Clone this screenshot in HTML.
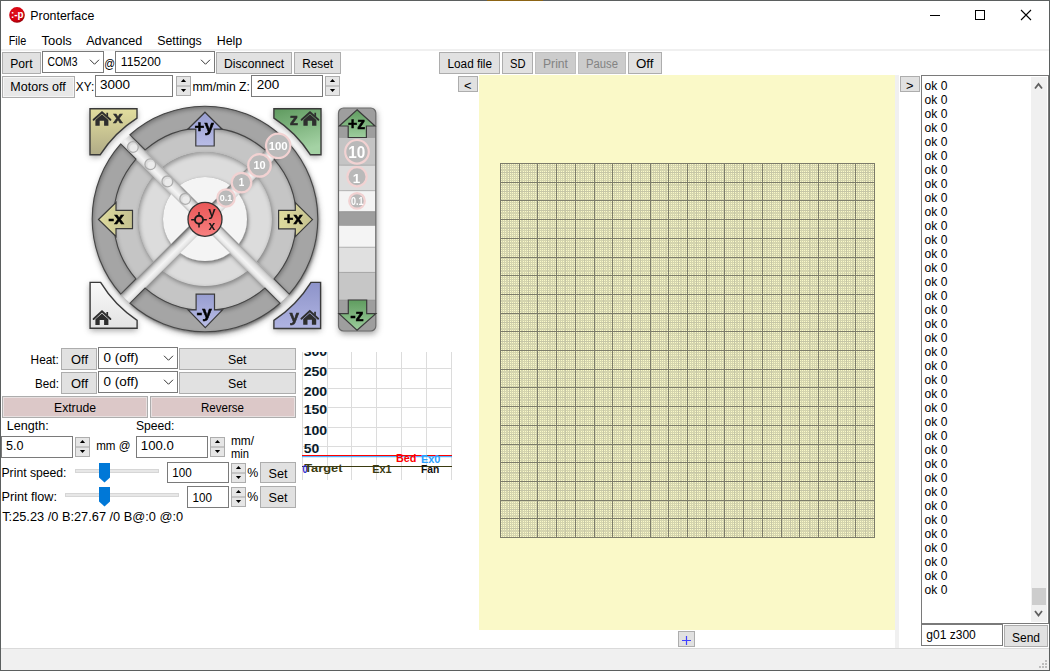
<!DOCTYPE html>
<html><head><meta charset="utf-8"><title>Pronterface</title>
<style>html,body{margin:0;padding:0;width:1050px;height:671px;overflow:hidden;background:#fff;position:relative}</style>
</head><body>
<svg width="1050" height="671" viewBox="0 0 1050 671" font-family='"Liberation Sans", sans-serif' style="position:absolute;left:0;top:0">
<defs>
<filter id="blur3" x="-20%" y="-20%" width="140%" height="140%"><feGaussianBlur stdDeviation="3"/></filter>
<filter id="blur2" x="-20%" y="-20%" width="140%" height="140%"><feGaussianBlur stdDeviation="2"/></filter>
<filter id="blur1" x="-20%" y="-20%" width="140%" height="140%"><feGaussianBlur stdDeviation="1"/></filter>
</defs>
<rect x="0" y="0" width="1050" height="671" fill="#ffffff"/>
<radialGradient id="icong" cx="0.4" cy="0.35" r="0.7"><stop offset="0" stop-color="#e0101a"/><stop offset="0.7" stop-color="#d4000e"/><stop offset="1" stop-color="#8a0008"/></radialGradient>
<circle cx="17" cy="14.9" r="7.8" fill="url(#icong)"/>
<text x="17.2" y="18.0" font-size="10" fill="#fff" font-weight="bold" textLength="12.5" lengthAdjust="spacingAndGlyphs" text-anchor="middle">:-p</text>
<text x="30.3" y="19.8" font-size="12.3" fill="#000" textLength="64" lengthAdjust="spacingAndGlyphs">Pronterface</text>
<line x1="930" y1="15.5" x2="940" y2="15.5" stroke="#000" stroke-width="1"/>
<rect x="975.5" y="10.5" width="9" height="9" fill="none" stroke="#000" stroke-width="1"/>
<path d="M1021,10 L1031,20 M1031,10 L1021,20" stroke="#000" stroke-width="1.1"/>
<text x="8.7" y="44.7" font-size="12" fill="#000" textLength="17.5" lengthAdjust="spacingAndGlyphs">File</text>
<text x="41.5" y="44.7" font-size="12" fill="#000" textLength="30.3" lengthAdjust="spacingAndGlyphs">Tools</text>
<text x="86.2" y="44.7" font-size="12" fill="#000" textLength="56.2" lengthAdjust="spacingAndGlyphs">Advanced</text>
<text x="157.2" y="44.7" font-size="12" fill="#000" textLength="44.6" lengthAdjust="spacingAndGlyphs">Settings</text>
<text x="216.7" y="44.7" font-size="12" fill="#000" textLength="25.5" lengthAdjust="spacingAndGlyphs">Help</text>
<rect x="1" y="49" width="1048" height="2" fill="#f0f0f0"/>
<rect x="2.5" y="52.5" width="38" height="21" fill="#e1e1e1" stroke="#adadad" stroke-width="1"/>
<text x="10.3" y="67.7" font-size="12" fill="#000" textLength="22.2" lengthAdjust="spacingAndGlyphs">Port</text>
<rect x="42.5" y="51.5" width="61" height="21" fill="#fff" stroke="#7a7a7a" stroke-width="1"/>
<text x="47.5" y="65.5" font-size="12" fill="#000" textLength="30" lengthAdjust="spacingAndGlyphs">COM3</text>
<path d="M90.0,59.75 L94.5,64.25 L99.0,59.75" fill="none" stroke="#333" stroke-width="1"/>
<text x="104.2" y="67.5" font-size="12" fill="#000" textLength="10.8" lengthAdjust="spacingAndGlyphs">@</text>
<rect x="115.5" y="51.5" width="99" height="21" fill="#fff" stroke="#7a7a7a" stroke-width="1"/>
<text x="120.8" y="65.5" font-size="12" fill="#000" textLength="40" lengthAdjust="spacingAndGlyphs">115200</text>
<path d="M201.0,59.75 L205.5,64.25 L210.0,59.75" fill="none" stroke="#333" stroke-width="1"/>
<rect x="216.5" y="52.5" width="75" height="21" fill="#e1e1e1" stroke="#adadad" stroke-width="1"/>
<text x="224.1" y="67.7" font-size="12" fill="#000" textLength="60" lengthAdjust="spacingAndGlyphs">Disconnect</text>
<rect x="294.5" y="52.5" width="46" height="21" fill="#e1e1e1" stroke="#adadad" stroke-width="1"/>
<text x="302.2" y="67.7" font-size="12" fill="#000" textLength="30.8" lengthAdjust="spacingAndGlyphs">Reset</text>
<rect x="439.5" y="52.5" width="60" height="21" fill="#e1e1e1" stroke="#adadad" stroke-width="1"/>
<text x="447.5" y="67.7" font-size="12" fill="#000" textLength="44.5" lengthAdjust="spacingAndGlyphs">Load file</text>
<rect x="502.5" y="52.5" width="30" height="21" fill="#e1e1e1" stroke="#adadad" stroke-width="1"/>
<text x="510" y="67.7" font-size="12" fill="#000" textLength="15.5" lengthAdjust="spacingAndGlyphs">SD</text>
<rect x="535.5" y="52.5" width="40" height="21" fill="#cccccc" stroke="#bfbfbf" stroke-width="1"/>
<text x="543" y="67.7" font-size="12" fill="#838383" textLength="25" lengthAdjust="spacingAndGlyphs">Print</text>
<rect x="578.5" y="52.5" width="47" height="21" fill="#cccccc" stroke="#bfbfbf" stroke-width="1"/>
<text x="586" y="67.7" font-size="12" fill="#838383" textLength="32" lengthAdjust="spacingAndGlyphs">Pause</text>
<rect x="628.5" y="52.5" width="33" height="21" fill="#e1e1e1" stroke="#adadad" stroke-width="1"/>
<text x="636" y="67.7" font-size="12" fill="#000" textLength="17.5" lengthAdjust="spacingAndGlyphs">Off</text>
<rect x="2.5" y="76.5" width="72" height="21" fill="#e1e1e1" stroke="#adadad" stroke-width="1"/>
<rect x="3.5" y="77.5" width="70" height="19" fill="#e8e8e8" stroke="#f5f5f5" stroke-width="1"/>
<text x="10.3" y="91" font-size="12" fill="#000" textLength="55.5" lengthAdjust="spacingAndGlyphs">Motors off</text>
<text x="75.8" y="91" font-size="12" fill="#000" textLength="18.4" lengthAdjust="spacingAndGlyphs">XY:</text>
<rect x="95.5" y="75.5" width="77" height="21" fill="#fff" stroke="#7a7a7a" stroke-width="1"/>
<text x="100" y="88.8" font-size="12" fill="#000" textLength="30" lengthAdjust="spacingAndGlyphs">3000</text>
<rect x="176.5" y="76.5" width="14" height="19" fill="#e6e6e6" stroke="#adadad" stroke-width="1"/>
<line x1="176" y1="86.0" x2="191" y2="86.0" stroke="#adadad" stroke-width="1.2"/>
<path d="M180.9,82 L183.5,79 L186.1,82 Z" fill="#000"/>
<path d="M180.9,89 L183.5,92 L186.1,89 Z" fill="#000"/>
<text x="192.4" y="91" font-size="12" fill="#000" textLength="57.5" lengthAdjust="spacingAndGlyphs">mm/min Z:</text>
<rect x="251.5" y="75.5" width="71" height="21" fill="#fff" stroke="#7a7a7a" stroke-width="1"/>
<text x="256.8" y="88.8" font-size="12" fill="#000" textLength="22.5" lengthAdjust="spacingAndGlyphs">200</text>
<rect x="325.5" y="76.5" width="14" height="19" fill="#e6e6e6" stroke="#adadad" stroke-width="1"/>
<line x1="325" y1="86.0" x2="340" y2="86.0" stroke="#adadad" stroke-width="1.2"/>
<path d="M329.9,82 L332.5,79 L335.1,82 Z" fill="#000"/>
<path d="M329.9,89 L332.5,92 L335.1,89 Z" fill="#000"/>
<rect x="458.5" y="76.5" width="19" height="15" fill="#e1e1e1" stroke="#adadad" stroke-width="1"/>
<text x="464" y="89.8" font-size="12" fill="#000" textLength="7.5" lengthAdjust="spacingAndGlyphs">&lt;</text>
<rect x="479" y="75" width="416" height="555" fill="#faf9c8"/>
<rect x="895" y="75" width="4" height="573" fill="#f0f0f0"/>
<rect x="900.5" y="76.5" width="19" height="15" fill="#e1e1e1" stroke="#adadad" stroke-width="1"/>
<text x="906" y="89.8" font-size="12" fill="#000" textLength="7.5" lengthAdjust="spacingAndGlyphs">&gt;</text>
<rect x="678.5" y="631.5" width="16" height="15" fill="#e1e1e1" stroke="#adadad" stroke-width="1"/>
<text x="686.5" y="643.3" font-size="12" fill="#000" text-anchor="middle"></text>
<path d="M682,640.5 L691,640.5 M686.5,636 L686.5,645" stroke="#4040ff" stroke-width="1.2"/>
<g shape-rendering="crispEdges">
<line x1="502.5" y1="163" x2="502.5" y2="538" stroke="#d4d4ae"/>
<line x1="500" y1="165.5" x2="875" y2="165.5" stroke="#d4d4ae"/>
<line x1="504.5" y1="163" x2="504.5" y2="538" stroke="#d4d4ae"/>
<line x1="500" y1="167.5" x2="875" y2="167.5" stroke="#d4d4ae"/>
<line x1="506.5" y1="163" x2="506.5" y2="538" stroke="#d4d4ae"/>
<line x1="500" y1="169.5" x2="875" y2="169.5" stroke="#d4d4ae"/>
<line x1="507.5" y1="163" x2="507.5" y2="538" stroke="#d4d4ae"/>
<line x1="500" y1="170.5" x2="875" y2="170.5" stroke="#d4d4ae"/>
<line x1="511.5" y1="163" x2="511.5" y2="538" stroke="#d4d4ae"/>
<line x1="500" y1="174.5" x2="875" y2="174.5" stroke="#d4d4ae"/>
<line x1="513.5" y1="163" x2="513.5" y2="538" stroke="#d4d4ae"/>
<line x1="500" y1="176.5" x2="875" y2="176.5" stroke="#d4d4ae"/>
<line x1="515.5" y1="163" x2="515.5" y2="538" stroke="#d4d4ae"/>
<line x1="500" y1="178.5" x2="875" y2="178.5" stroke="#d4d4ae"/>
<line x1="517.5" y1="163" x2="517.5" y2="538" stroke="#d4d4ae"/>
<line x1="500" y1="180.5" x2="875" y2="180.5" stroke="#d4d4ae"/>
<line x1="521.5" y1="163" x2="521.5" y2="538" stroke="#d4d4ae"/>
<line x1="500" y1="184.5" x2="875" y2="184.5" stroke="#d4d4ae"/>
<line x1="522.5" y1="163" x2="522.5" y2="538" stroke="#d4d4ae"/>
<line x1="500" y1="185.5" x2="875" y2="185.5" stroke="#d4d4ae"/>
<line x1="524.5" y1="163" x2="524.5" y2="538" stroke="#d4d4ae"/>
<line x1="500" y1="187.5" x2="875" y2="187.5" stroke="#d4d4ae"/>
<line x1="526.5" y1="163" x2="526.5" y2="538" stroke="#d4d4ae"/>
<line x1="500" y1="189.5" x2="875" y2="189.5" stroke="#d4d4ae"/>
<line x1="530.5" y1="163" x2="530.5" y2="538" stroke="#d4d4ae"/>
<line x1="500" y1="193.5" x2="875" y2="193.5" stroke="#d4d4ae"/>
<line x1="532.5" y1="163" x2="532.5" y2="538" stroke="#d4d4ae"/>
<line x1="500" y1="195.5" x2="875" y2="195.5" stroke="#d4d4ae"/>
<line x1="534.5" y1="163" x2="534.5" y2="538" stroke="#d4d4ae"/>
<line x1="500" y1="197.5" x2="875" y2="197.5" stroke="#d4d4ae"/>
<line x1="536.5" y1="163" x2="536.5" y2="538" stroke="#d4d4ae"/>
<line x1="500" y1="199.5" x2="875" y2="199.5" stroke="#d4d4ae"/>
<line x1="539.5" y1="163" x2="539.5" y2="538" stroke="#d4d4ae"/>
<line x1="500" y1="202.5" x2="875" y2="202.5" stroke="#d4d4ae"/>
<line x1="541.5" y1="163" x2="541.5" y2="538" stroke="#d4d4ae"/>
<line x1="500" y1="204.5" x2="875" y2="204.5" stroke="#d4d4ae"/>
<line x1="543.5" y1="163" x2="543.5" y2="538" stroke="#d4d4ae"/>
<line x1="500" y1="206.5" x2="875" y2="206.5" stroke="#d4d4ae"/>
<line x1="545.5" y1="163" x2="545.5" y2="538" stroke="#d4d4ae"/>
<line x1="500" y1="208.5" x2="875" y2="208.5" stroke="#d4d4ae"/>
<line x1="549.5" y1="163" x2="549.5" y2="538" stroke="#d4d4ae"/>
<line x1="500" y1="212.5" x2="875" y2="212.5" stroke="#d4d4ae"/>
<line x1="550.5" y1="163" x2="550.5" y2="538" stroke="#d4d4ae"/>
<line x1="500" y1="213.5" x2="875" y2="213.5" stroke="#d4d4ae"/>
<line x1="552.5" y1="163" x2="552.5" y2="538" stroke="#d4d4ae"/>
<line x1="500" y1="215.5" x2="875" y2="215.5" stroke="#d4d4ae"/>
<line x1="554.5" y1="163" x2="554.5" y2="538" stroke="#d4d4ae"/>
<line x1="500" y1="217.5" x2="875" y2="217.5" stroke="#d4d4ae"/>
<line x1="558.5" y1="163" x2="558.5" y2="538" stroke="#d4d4ae"/>
<line x1="500" y1="221.5" x2="875" y2="221.5" stroke="#d4d4ae"/>
<line x1="560.5" y1="163" x2="560.5" y2="538" stroke="#d4d4ae"/>
<line x1="500" y1="223.5" x2="875" y2="223.5" stroke="#d4d4ae"/>
<line x1="562.5" y1="163" x2="562.5" y2="538" stroke="#d4d4ae"/>
<line x1="500" y1="225.5" x2="875" y2="225.5" stroke="#d4d4ae"/>
<line x1="564.5" y1="163" x2="564.5" y2="538" stroke="#d4d4ae"/>
<line x1="500" y1="227.5" x2="875" y2="227.5" stroke="#d4d4ae"/>
<line x1="567.5" y1="163" x2="567.5" y2="538" stroke="#d4d4ae"/>
<line x1="500" y1="230.5" x2="875" y2="230.5" stroke="#d4d4ae"/>
<line x1="569.5" y1="163" x2="569.5" y2="538" stroke="#d4d4ae"/>
<line x1="500" y1="232.5" x2="875" y2="232.5" stroke="#d4d4ae"/>
<line x1="571.5" y1="163" x2="571.5" y2="538" stroke="#d4d4ae"/>
<line x1="500" y1="234.5" x2="875" y2="234.5" stroke="#d4d4ae"/>
<line x1="573.5" y1="163" x2="573.5" y2="538" stroke="#d4d4ae"/>
<line x1="500" y1="236.5" x2="875" y2="236.5" stroke="#d4d4ae"/>
<line x1="577.5" y1="163" x2="577.5" y2="538" stroke="#d4d4ae"/>
<line x1="500" y1="240.5" x2="875" y2="240.5" stroke="#d4d4ae"/>
<line x1="579.5" y1="163" x2="579.5" y2="538" stroke="#d4d4ae"/>
<line x1="500" y1="242.5" x2="875" y2="242.5" stroke="#d4d4ae"/>
<line x1="580.5" y1="163" x2="580.5" y2="538" stroke="#d4d4ae"/>
<line x1="500" y1="243.5" x2="875" y2="243.5" stroke="#d4d4ae"/>
<line x1="582.5" y1="163" x2="582.5" y2="538" stroke="#d4d4ae"/>
<line x1="500" y1="245.5" x2="875" y2="245.5" stroke="#d4d4ae"/>
<line x1="586.5" y1="163" x2="586.5" y2="538" stroke="#d4d4ae"/>
<line x1="500" y1="249.5" x2="875" y2="249.5" stroke="#d4d4ae"/>
<line x1="588.5" y1="163" x2="588.5" y2="538" stroke="#d4d4ae"/>
<line x1="500" y1="251.5" x2="875" y2="251.5" stroke="#d4d4ae"/>
<line x1="590.5" y1="163" x2="590.5" y2="538" stroke="#d4d4ae"/>
<line x1="500" y1="253.5" x2="875" y2="253.5" stroke="#d4d4ae"/>
<line x1="592.5" y1="163" x2="592.5" y2="538" stroke="#d4d4ae"/>
<line x1="500" y1="255.5" x2="875" y2="255.5" stroke="#d4d4ae"/>
<line x1="595.5" y1="163" x2="595.5" y2="538" stroke="#d4d4ae"/>
<line x1="500" y1="258.5" x2="875" y2="258.5" stroke="#d4d4ae"/>
<line x1="597.5" y1="163" x2="597.5" y2="538" stroke="#d4d4ae"/>
<line x1="500" y1="260.5" x2="875" y2="260.5" stroke="#d4d4ae"/>
<line x1="599.5" y1="163" x2="599.5" y2="538" stroke="#d4d4ae"/>
<line x1="500" y1="262.5" x2="875" y2="262.5" stroke="#d4d4ae"/>
<line x1="601.5" y1="163" x2="601.5" y2="538" stroke="#d4d4ae"/>
<line x1="500" y1="264.5" x2="875" y2="264.5" stroke="#d4d4ae"/>
<line x1="605.5" y1="163" x2="605.5" y2="538" stroke="#d4d4ae"/>
<line x1="500" y1="268.5" x2="875" y2="268.5" stroke="#d4d4ae"/>
<line x1="607.5" y1="163" x2="607.5" y2="538" stroke="#d4d4ae"/>
<line x1="500" y1="270.5" x2="875" y2="270.5" stroke="#d4d4ae"/>
<line x1="608.5" y1="163" x2="608.5" y2="538" stroke="#d4d4ae"/>
<line x1="500" y1="271.5" x2="875" y2="271.5" stroke="#d4d4ae"/>
<line x1="610.5" y1="163" x2="610.5" y2="538" stroke="#d4d4ae"/>
<line x1="500" y1="273.5" x2="875" y2="273.5" stroke="#d4d4ae"/>
<line x1="614.5" y1="163" x2="614.5" y2="538" stroke="#d4d4ae"/>
<line x1="500" y1="277.5" x2="875" y2="277.5" stroke="#d4d4ae"/>
<line x1="616.5" y1="163" x2="616.5" y2="538" stroke="#d4d4ae"/>
<line x1="500" y1="279.5" x2="875" y2="279.5" stroke="#d4d4ae"/>
<line x1="618.5" y1="163" x2="618.5" y2="538" stroke="#d4d4ae"/>
<line x1="500" y1="281.5" x2="875" y2="281.5" stroke="#d4d4ae"/>
<line x1="620.5" y1="163" x2="620.5" y2="538" stroke="#d4d4ae"/>
<line x1="500" y1="283.5" x2="875" y2="283.5" stroke="#d4d4ae"/>
<line x1="623.5" y1="163" x2="623.5" y2="538" stroke="#d4d4ae"/>
<line x1="500" y1="286.5" x2="875" y2="286.5" stroke="#d4d4ae"/>
<line x1="625.5" y1="163" x2="625.5" y2="538" stroke="#d4d4ae"/>
<line x1="500" y1="288.5" x2="875" y2="288.5" stroke="#d4d4ae"/>
<line x1="627.5" y1="163" x2="627.5" y2="538" stroke="#d4d4ae"/>
<line x1="500" y1="290.5" x2="875" y2="290.5" stroke="#d4d4ae"/>
<line x1="629.5" y1="163" x2="629.5" y2="538" stroke="#d4d4ae"/>
<line x1="500" y1="292.5" x2="875" y2="292.5" stroke="#d4d4ae"/>
<line x1="633.5" y1="163" x2="633.5" y2="538" stroke="#d4d4ae"/>
<line x1="500" y1="296.5" x2="875" y2="296.5" stroke="#d4d4ae"/>
<line x1="635.5" y1="163" x2="635.5" y2="538" stroke="#d4d4ae"/>
<line x1="500" y1="298.5" x2="875" y2="298.5" stroke="#d4d4ae"/>
<line x1="637.5" y1="163" x2="637.5" y2="538" stroke="#d4d4ae"/>
<line x1="500" y1="300.5" x2="875" y2="300.5" stroke="#d4d4ae"/>
<line x1="638.5" y1="163" x2="638.5" y2="538" stroke="#d4d4ae"/>
<line x1="500" y1="301.5" x2="875" y2="301.5" stroke="#d4d4ae"/>
<line x1="642.5" y1="163" x2="642.5" y2="538" stroke="#d4d4ae"/>
<line x1="500" y1="305.5" x2="875" y2="305.5" stroke="#d4d4ae"/>
<line x1="644.5" y1="163" x2="644.5" y2="538" stroke="#d4d4ae"/>
<line x1="500" y1="307.5" x2="875" y2="307.5" stroke="#d4d4ae"/>
<line x1="646.5" y1="163" x2="646.5" y2="538" stroke="#d4d4ae"/>
<line x1="500" y1="309.5" x2="875" y2="309.5" stroke="#d4d4ae"/>
<line x1="648.5" y1="163" x2="648.5" y2="538" stroke="#d4d4ae"/>
<line x1="500" y1="311.5" x2="875" y2="311.5" stroke="#d4d4ae"/>
<line x1="651.5" y1="163" x2="651.5" y2="538" stroke="#d4d4ae"/>
<line x1="500" y1="314.5" x2="875" y2="314.5" stroke="#d4d4ae"/>
<line x1="653.5" y1="163" x2="653.5" y2="538" stroke="#d4d4ae"/>
<line x1="500" y1="316.5" x2="875" y2="316.5" stroke="#d4d4ae"/>
<line x1="655.5" y1="163" x2="655.5" y2="538" stroke="#d4d4ae"/>
<line x1="500" y1="318.5" x2="875" y2="318.5" stroke="#d4d4ae"/>
<line x1="657.5" y1="163" x2="657.5" y2="538" stroke="#d4d4ae"/>
<line x1="500" y1="320.5" x2="875" y2="320.5" stroke="#d4d4ae"/>
<line x1="661.5" y1="163" x2="661.5" y2="538" stroke="#d4d4ae"/>
<line x1="500" y1="324.5" x2="875" y2="324.5" stroke="#d4d4ae"/>
<line x1="663.5" y1="163" x2="663.5" y2="538" stroke="#d4d4ae"/>
<line x1="500" y1="326.5" x2="875" y2="326.5" stroke="#d4d4ae"/>
<line x1="665.5" y1="163" x2="665.5" y2="538" stroke="#d4d4ae"/>
<line x1="500" y1="328.5" x2="875" y2="328.5" stroke="#d4d4ae"/>
<line x1="666.5" y1="163" x2="666.5" y2="538" stroke="#d4d4ae"/>
<line x1="500" y1="329.5" x2="875" y2="329.5" stroke="#d4d4ae"/>
<line x1="670.5" y1="163" x2="670.5" y2="538" stroke="#d4d4ae"/>
<line x1="500" y1="333.5" x2="875" y2="333.5" stroke="#d4d4ae"/>
<line x1="672.5" y1="163" x2="672.5" y2="538" stroke="#d4d4ae"/>
<line x1="500" y1="335.5" x2="875" y2="335.5" stroke="#d4d4ae"/>
<line x1="674.5" y1="163" x2="674.5" y2="538" stroke="#d4d4ae"/>
<line x1="500" y1="337.5" x2="875" y2="337.5" stroke="#d4d4ae"/>
<line x1="676.5" y1="163" x2="676.5" y2="538" stroke="#d4d4ae"/>
<line x1="500" y1="339.5" x2="875" y2="339.5" stroke="#d4d4ae"/>
<line x1="680.5" y1="163" x2="680.5" y2="538" stroke="#d4d4ae"/>
<line x1="500" y1="343.5" x2="875" y2="343.5" stroke="#d4d4ae"/>
<line x1="681.5" y1="163" x2="681.5" y2="538" stroke="#d4d4ae"/>
<line x1="500" y1="344.5" x2="875" y2="344.5" stroke="#d4d4ae"/>
<line x1="683.5" y1="163" x2="683.5" y2="538" stroke="#d4d4ae"/>
<line x1="500" y1="346.5" x2="875" y2="346.5" stroke="#d4d4ae"/>
<line x1="685.5" y1="163" x2="685.5" y2="538" stroke="#d4d4ae"/>
<line x1="500" y1="348.5" x2="875" y2="348.5" stroke="#d4d4ae"/>
<line x1="689.5" y1="163" x2="689.5" y2="538" stroke="#d4d4ae"/>
<line x1="500" y1="352.5" x2="875" y2="352.5" stroke="#d4d4ae"/>
<line x1="691.5" y1="163" x2="691.5" y2="538" stroke="#d4d4ae"/>
<line x1="500" y1="354.5" x2="875" y2="354.5" stroke="#d4d4ae"/>
<line x1="693.5" y1="163" x2="693.5" y2="538" stroke="#d4d4ae"/>
<line x1="500" y1="356.5" x2="875" y2="356.5" stroke="#d4d4ae"/>
<line x1="694.5" y1="163" x2="694.5" y2="538" stroke="#d4d4ae"/>
<line x1="500" y1="357.5" x2="875" y2="357.5" stroke="#d4d4ae"/>
<line x1="698.5" y1="163" x2="698.5" y2="538" stroke="#d4d4ae"/>
<line x1="500" y1="361.5" x2="875" y2="361.5" stroke="#d4d4ae"/>
<line x1="700.5" y1="163" x2="700.5" y2="538" stroke="#d4d4ae"/>
<line x1="500" y1="363.5" x2="875" y2="363.5" stroke="#d4d4ae"/>
<line x1="702.5" y1="163" x2="702.5" y2="538" stroke="#d4d4ae"/>
<line x1="500" y1="365.5" x2="875" y2="365.5" stroke="#d4d4ae"/>
<line x1="704.5" y1="163" x2="704.5" y2="538" stroke="#d4d4ae"/>
<line x1="500" y1="367.5" x2="875" y2="367.5" stroke="#d4d4ae"/>
<line x1="708.5" y1="163" x2="708.5" y2="538" stroke="#d4d4ae"/>
<line x1="500" y1="371.5" x2="875" y2="371.5" stroke="#d4d4ae"/>
<line x1="709.5" y1="163" x2="709.5" y2="538" stroke="#d4d4ae"/>
<line x1="500" y1="372.5" x2="875" y2="372.5" stroke="#d4d4ae"/>
<line x1="711.5" y1="163" x2="711.5" y2="538" stroke="#d4d4ae"/>
<line x1="500" y1="374.5" x2="875" y2="374.5" stroke="#d4d4ae"/>
<line x1="713.5" y1="163" x2="713.5" y2="538" stroke="#d4d4ae"/>
<line x1="500" y1="376.5" x2="875" y2="376.5" stroke="#d4d4ae"/>
<line x1="717.5" y1="163" x2="717.5" y2="538" stroke="#d4d4ae"/>
<line x1="500" y1="380.5" x2="875" y2="380.5" stroke="#d4d4ae"/>
<line x1="719.5" y1="163" x2="719.5" y2="538" stroke="#d4d4ae"/>
<line x1="500" y1="382.5" x2="875" y2="382.5" stroke="#d4d4ae"/>
<line x1="721.5" y1="163" x2="721.5" y2="538" stroke="#d4d4ae"/>
<line x1="500" y1="384.5" x2="875" y2="384.5" stroke="#d4d4ae"/>
<line x1="723.5" y1="163" x2="723.5" y2="538" stroke="#d4d4ae"/>
<line x1="500" y1="386.5" x2="875" y2="386.5" stroke="#d4d4ae"/>
<line x1="726.5" y1="163" x2="726.5" y2="538" stroke="#d4d4ae"/>
<line x1="500" y1="389.5" x2="875" y2="389.5" stroke="#d4d4ae"/>
<line x1="728.5" y1="163" x2="728.5" y2="538" stroke="#d4d4ae"/>
<line x1="500" y1="391.5" x2="875" y2="391.5" stroke="#d4d4ae"/>
<line x1="730.5" y1="163" x2="730.5" y2="538" stroke="#d4d4ae"/>
<line x1="500" y1="393.5" x2="875" y2="393.5" stroke="#d4d4ae"/>
<line x1="732.5" y1="163" x2="732.5" y2="538" stroke="#d4d4ae"/>
<line x1="500" y1="395.5" x2="875" y2="395.5" stroke="#d4d4ae"/>
<line x1="736.5" y1="163" x2="736.5" y2="538" stroke="#d4d4ae"/>
<line x1="500" y1="399.5" x2="875" y2="399.5" stroke="#d4d4ae"/>
<line x1="737.5" y1="163" x2="737.5" y2="538" stroke="#d4d4ae"/>
<line x1="500" y1="400.5" x2="875" y2="400.5" stroke="#d4d4ae"/>
<line x1="739.5" y1="163" x2="739.5" y2="538" stroke="#d4d4ae"/>
<line x1="500" y1="402.5" x2="875" y2="402.5" stroke="#d4d4ae"/>
<line x1="741.5" y1="163" x2="741.5" y2="538" stroke="#d4d4ae"/>
<line x1="500" y1="404.5" x2="875" y2="404.5" stroke="#d4d4ae"/>
<line x1="745.5" y1="163" x2="745.5" y2="538" stroke="#d4d4ae"/>
<line x1="500" y1="408.5" x2="875" y2="408.5" stroke="#d4d4ae"/>
<line x1="747.5" y1="163" x2="747.5" y2="538" stroke="#d4d4ae"/>
<line x1="500" y1="410.5" x2="875" y2="410.5" stroke="#d4d4ae"/>
<line x1="749.5" y1="163" x2="749.5" y2="538" stroke="#d4d4ae"/>
<line x1="500" y1="412.5" x2="875" y2="412.5" stroke="#d4d4ae"/>
<line x1="751.5" y1="163" x2="751.5" y2="538" stroke="#d4d4ae"/>
<line x1="500" y1="414.5" x2="875" y2="414.5" stroke="#d4d4ae"/>
<line x1="754.5" y1="163" x2="754.5" y2="538" stroke="#d4d4ae"/>
<line x1="500" y1="417.5" x2="875" y2="417.5" stroke="#d4d4ae"/>
<line x1="756.5" y1="163" x2="756.5" y2="538" stroke="#d4d4ae"/>
<line x1="500" y1="419.5" x2="875" y2="419.5" stroke="#d4d4ae"/>
<line x1="758.5" y1="163" x2="758.5" y2="538" stroke="#d4d4ae"/>
<line x1="500" y1="421.5" x2="875" y2="421.5" stroke="#d4d4ae"/>
<line x1="760.5" y1="163" x2="760.5" y2="538" stroke="#d4d4ae"/>
<line x1="500" y1="423.5" x2="875" y2="423.5" stroke="#d4d4ae"/>
<line x1="764.5" y1="163" x2="764.5" y2="538" stroke="#d4d4ae"/>
<line x1="500" y1="427.5" x2="875" y2="427.5" stroke="#d4d4ae"/>
<line x1="766.5" y1="163" x2="766.5" y2="538" stroke="#d4d4ae"/>
<line x1="500" y1="429.5" x2="875" y2="429.5" stroke="#d4d4ae"/>
<line x1="767.5" y1="163" x2="767.5" y2="538" stroke="#d4d4ae"/>
<line x1="500" y1="430.5" x2="875" y2="430.5" stroke="#d4d4ae"/>
<line x1="769.5" y1="163" x2="769.5" y2="538" stroke="#d4d4ae"/>
<line x1="500" y1="432.5" x2="875" y2="432.5" stroke="#d4d4ae"/>
<line x1="773.5" y1="163" x2="773.5" y2="538" stroke="#d4d4ae"/>
<line x1="500" y1="436.5" x2="875" y2="436.5" stroke="#d4d4ae"/>
<line x1="775.5" y1="163" x2="775.5" y2="538" stroke="#d4d4ae"/>
<line x1="500" y1="438.5" x2="875" y2="438.5" stroke="#d4d4ae"/>
<line x1="777.5" y1="163" x2="777.5" y2="538" stroke="#d4d4ae"/>
<line x1="500" y1="440.5" x2="875" y2="440.5" stroke="#d4d4ae"/>
<line x1="779.5" y1="163" x2="779.5" y2="538" stroke="#d4d4ae"/>
<line x1="500" y1="442.5" x2="875" y2="442.5" stroke="#d4d4ae"/>
<line x1="782.5" y1="163" x2="782.5" y2="538" stroke="#d4d4ae"/>
<line x1="500" y1="445.5" x2="875" y2="445.5" stroke="#d4d4ae"/>
<line x1="784.5" y1="163" x2="784.5" y2="538" stroke="#d4d4ae"/>
<line x1="500" y1="447.5" x2="875" y2="447.5" stroke="#d4d4ae"/>
<line x1="786.5" y1="163" x2="786.5" y2="538" stroke="#d4d4ae"/>
<line x1="500" y1="449.5" x2="875" y2="449.5" stroke="#d4d4ae"/>
<line x1="788.5" y1="163" x2="788.5" y2="538" stroke="#d4d4ae"/>
<line x1="500" y1="451.5" x2="875" y2="451.5" stroke="#d4d4ae"/>
<line x1="792.5" y1="163" x2="792.5" y2="538" stroke="#d4d4ae"/>
<line x1="500" y1="455.5" x2="875" y2="455.5" stroke="#d4d4ae"/>
<line x1="794.5" y1="163" x2="794.5" y2="538" stroke="#d4d4ae"/>
<line x1="500" y1="457.5" x2="875" y2="457.5" stroke="#d4d4ae"/>
<line x1="795.5" y1="163" x2="795.5" y2="538" stroke="#d4d4ae"/>
<line x1="500" y1="458.5" x2="875" y2="458.5" stroke="#d4d4ae"/>
<line x1="797.5" y1="163" x2="797.5" y2="538" stroke="#d4d4ae"/>
<line x1="500" y1="460.5" x2="875" y2="460.5" stroke="#d4d4ae"/>
<line x1="801.5" y1="163" x2="801.5" y2="538" stroke="#d4d4ae"/>
<line x1="500" y1="464.5" x2="875" y2="464.5" stroke="#d4d4ae"/>
<line x1="803.5" y1="163" x2="803.5" y2="538" stroke="#d4d4ae"/>
<line x1="500" y1="466.5" x2="875" y2="466.5" stroke="#d4d4ae"/>
<line x1="805.5" y1="163" x2="805.5" y2="538" stroke="#d4d4ae"/>
<line x1="500" y1="468.5" x2="875" y2="468.5" stroke="#d4d4ae"/>
<line x1="807.5" y1="163" x2="807.5" y2="538" stroke="#d4d4ae"/>
<line x1="500" y1="470.5" x2="875" y2="470.5" stroke="#d4d4ae"/>
<line x1="810.5" y1="163" x2="810.5" y2="538" stroke="#d4d4ae"/>
<line x1="500" y1="473.5" x2="875" y2="473.5" stroke="#d4d4ae"/>
<line x1="812.5" y1="163" x2="812.5" y2="538" stroke="#d4d4ae"/>
<line x1="500" y1="475.5" x2="875" y2="475.5" stroke="#d4d4ae"/>
<line x1="814.5" y1="163" x2="814.5" y2="538" stroke="#d4d4ae"/>
<line x1="500" y1="477.5" x2="875" y2="477.5" stroke="#d4d4ae"/>
<line x1="816.5" y1="163" x2="816.5" y2="538" stroke="#d4d4ae"/>
<line x1="500" y1="479.5" x2="875" y2="479.5" stroke="#d4d4ae"/>
<line x1="820.5" y1="163" x2="820.5" y2="538" stroke="#d4d4ae"/>
<line x1="500" y1="483.5" x2="875" y2="483.5" stroke="#d4d4ae"/>
<line x1="822.5" y1="163" x2="822.5" y2="538" stroke="#d4d4ae"/>
<line x1="500" y1="485.5" x2="875" y2="485.5" stroke="#d4d4ae"/>
<line x1="824.5" y1="163" x2="824.5" y2="538" stroke="#d4d4ae"/>
<line x1="500" y1="487.5" x2="875" y2="487.5" stroke="#d4d4ae"/>
<line x1="825.5" y1="163" x2="825.5" y2="538" stroke="#d4d4ae"/>
<line x1="500" y1="488.5" x2="875" y2="488.5" stroke="#d4d4ae"/>
<line x1="829.5" y1="163" x2="829.5" y2="538" stroke="#d4d4ae"/>
<line x1="500" y1="492.5" x2="875" y2="492.5" stroke="#d4d4ae"/>
<line x1="831.5" y1="163" x2="831.5" y2="538" stroke="#d4d4ae"/>
<line x1="500" y1="494.5" x2="875" y2="494.5" stroke="#d4d4ae"/>
<line x1="833.5" y1="163" x2="833.5" y2="538" stroke="#d4d4ae"/>
<line x1="500" y1="496.5" x2="875" y2="496.5" stroke="#d4d4ae"/>
<line x1="835.5" y1="163" x2="835.5" y2="538" stroke="#d4d4ae"/>
<line x1="500" y1="498.5" x2="875" y2="498.5" stroke="#d4d4ae"/>
<line x1="838.5" y1="163" x2="838.5" y2="538" stroke="#d4d4ae"/>
<line x1="500" y1="501.5" x2="875" y2="501.5" stroke="#d4d4ae"/>
<line x1="840.5" y1="163" x2="840.5" y2="538" stroke="#d4d4ae"/>
<line x1="500" y1="503.5" x2="875" y2="503.5" stroke="#d4d4ae"/>
<line x1="842.5" y1="163" x2="842.5" y2="538" stroke="#d4d4ae"/>
<line x1="500" y1="505.5" x2="875" y2="505.5" stroke="#d4d4ae"/>
<line x1="844.5" y1="163" x2="844.5" y2="538" stroke="#d4d4ae"/>
<line x1="500" y1="507.5" x2="875" y2="507.5" stroke="#d4d4ae"/>
<line x1="848.5" y1="163" x2="848.5" y2="538" stroke="#d4d4ae"/>
<line x1="500" y1="511.5" x2="875" y2="511.5" stroke="#d4d4ae"/>
<line x1="850.5" y1="163" x2="850.5" y2="538" stroke="#d4d4ae"/>
<line x1="500" y1="513.5" x2="875" y2="513.5" stroke="#d4d4ae"/>
<line x1="852.5" y1="163" x2="852.5" y2="538" stroke="#d4d4ae"/>
<line x1="500" y1="515.5" x2="875" y2="515.5" stroke="#d4d4ae"/>
<line x1="853.5" y1="163" x2="853.5" y2="538" stroke="#d4d4ae"/>
<line x1="500" y1="516.5" x2="875" y2="516.5" stroke="#d4d4ae"/>
<line x1="857.5" y1="163" x2="857.5" y2="538" stroke="#d4d4ae"/>
<line x1="500" y1="520.5" x2="875" y2="520.5" stroke="#d4d4ae"/>
<line x1="859.5" y1="163" x2="859.5" y2="538" stroke="#d4d4ae"/>
<line x1="500" y1="522.5" x2="875" y2="522.5" stroke="#d4d4ae"/>
<line x1="861.5" y1="163" x2="861.5" y2="538" stroke="#d4d4ae"/>
<line x1="500" y1="524.5" x2="875" y2="524.5" stroke="#d4d4ae"/>
<line x1="863.5" y1="163" x2="863.5" y2="538" stroke="#d4d4ae"/>
<line x1="500" y1="526.5" x2="875" y2="526.5" stroke="#d4d4ae"/>
<line x1="867.5" y1="163" x2="867.5" y2="538" stroke="#d4d4ae"/>
<line x1="500" y1="530.5" x2="875" y2="530.5" stroke="#d4d4ae"/>
<line x1="868.5" y1="163" x2="868.5" y2="538" stroke="#d4d4ae"/>
<line x1="500" y1="531.5" x2="875" y2="531.5" stroke="#d4d4ae"/>
<line x1="870.5" y1="163" x2="870.5" y2="538" stroke="#d4d4ae"/>
<line x1="500" y1="533.5" x2="875" y2="533.5" stroke="#d4d4ae"/>
<line x1="872.5" y1="163" x2="872.5" y2="538" stroke="#d4d4ae"/>
<line x1="500" y1="535.5" x2="875" y2="535.5" stroke="#d4d4ae"/>
<line x1="509.5" y1="163" x2="509.5" y2="538" stroke="#c6c6a6"/>
<line x1="500" y1="172.5" x2="875" y2="172.5" stroke="#c6c6a6"/>
<line x1="528.5" y1="163" x2="528.5" y2="538" stroke="#c6c6a6"/>
<line x1="500" y1="191.5" x2="875" y2="191.5" stroke="#c6c6a6"/>
<line x1="547.5" y1="163" x2="547.5" y2="538" stroke="#c6c6a6"/>
<line x1="500" y1="210.5" x2="875" y2="210.5" stroke="#c6c6a6"/>
<line x1="565.5" y1="163" x2="565.5" y2="538" stroke="#c6c6a6"/>
<line x1="500" y1="228.5" x2="875" y2="228.5" stroke="#c6c6a6"/>
<line x1="584.5" y1="163" x2="584.5" y2="538" stroke="#c6c6a6"/>
<line x1="500" y1="247.5" x2="875" y2="247.5" stroke="#c6c6a6"/>
<line x1="603.5" y1="163" x2="603.5" y2="538" stroke="#c6c6a6"/>
<line x1="500" y1="266.5" x2="875" y2="266.5" stroke="#c6c6a6"/>
<line x1="622.5" y1="163" x2="622.5" y2="538" stroke="#c6c6a6"/>
<line x1="500" y1="285.5" x2="875" y2="285.5" stroke="#c6c6a6"/>
<line x1="640.5" y1="163" x2="640.5" y2="538" stroke="#c6c6a6"/>
<line x1="500" y1="303.5" x2="875" y2="303.5" stroke="#c6c6a6"/>
<line x1="659.5" y1="163" x2="659.5" y2="538" stroke="#c6c6a6"/>
<line x1="500" y1="322.5" x2="875" y2="322.5" stroke="#c6c6a6"/>
<line x1="678.5" y1="163" x2="678.5" y2="538" stroke="#c6c6a6"/>
<line x1="500" y1="341.5" x2="875" y2="341.5" stroke="#c6c6a6"/>
<line x1="696.5" y1="163" x2="696.5" y2="538" stroke="#c6c6a6"/>
<line x1="500" y1="359.5" x2="875" y2="359.5" stroke="#c6c6a6"/>
<line x1="715.5" y1="163" x2="715.5" y2="538" stroke="#c6c6a6"/>
<line x1="500" y1="378.5" x2="875" y2="378.5" stroke="#c6c6a6"/>
<line x1="734.5" y1="163" x2="734.5" y2="538" stroke="#c6c6a6"/>
<line x1="500" y1="397.5" x2="875" y2="397.5" stroke="#c6c6a6"/>
<line x1="752.5" y1="163" x2="752.5" y2="538" stroke="#c6c6a6"/>
<line x1="500" y1="415.5" x2="875" y2="415.5" stroke="#c6c6a6"/>
<line x1="771.5" y1="163" x2="771.5" y2="538" stroke="#c6c6a6"/>
<line x1="500" y1="434.5" x2="875" y2="434.5" stroke="#c6c6a6"/>
<line x1="790.5" y1="163" x2="790.5" y2="538" stroke="#c6c6a6"/>
<line x1="500" y1="453.5" x2="875" y2="453.5" stroke="#c6c6a6"/>
<line x1="809.5" y1="163" x2="809.5" y2="538" stroke="#c6c6a6"/>
<line x1="500" y1="472.5" x2="875" y2="472.5" stroke="#c6c6a6"/>
<line x1="827.5" y1="163" x2="827.5" y2="538" stroke="#c6c6a6"/>
<line x1="500" y1="490.5" x2="875" y2="490.5" stroke="#c6c6a6"/>
<line x1="846.5" y1="163" x2="846.5" y2="538" stroke="#c6c6a6"/>
<line x1="500" y1="509.5" x2="875" y2="509.5" stroke="#c6c6a6"/>
<line x1="865.5" y1="163" x2="865.5" y2="538" stroke="#c6c6a6"/>
<line x1="500" y1="528.5" x2="875" y2="528.5" stroke="#c6c6a6"/>
<line x1="500.5" y1="163" x2="500.5" y2="538" stroke="#7c7c6a"/>
<line x1="500" y1="163.5" x2="875" y2="163.5" stroke="#7c7c6a"/>
<line x1="519.5" y1="163" x2="519.5" y2="538" stroke="#7c7c6a"/>
<line x1="500" y1="182.5" x2="875" y2="182.5" stroke="#7c7c6a"/>
<line x1="537.5" y1="163" x2="537.5" y2="538" stroke="#7c7c6a"/>
<line x1="500" y1="200.5" x2="875" y2="200.5" stroke="#7c7c6a"/>
<line x1="556.5" y1="163" x2="556.5" y2="538" stroke="#7c7c6a"/>
<line x1="500" y1="219.5" x2="875" y2="219.5" stroke="#7c7c6a"/>
<line x1="575.5" y1="163" x2="575.5" y2="538" stroke="#7c7c6a"/>
<line x1="500" y1="238.5" x2="875" y2="238.5" stroke="#7c7c6a"/>
<line x1="594.5" y1="163" x2="594.5" y2="538" stroke="#7c7c6a"/>
<line x1="500" y1="257.5" x2="875" y2="257.5" stroke="#7c7c6a"/>
<line x1="612.5" y1="163" x2="612.5" y2="538" stroke="#7c7c6a"/>
<line x1="500" y1="275.5" x2="875" y2="275.5" stroke="#7c7c6a"/>
<line x1="631.5" y1="163" x2="631.5" y2="538" stroke="#7c7c6a"/>
<line x1="500" y1="294.5" x2="875" y2="294.5" stroke="#7c7c6a"/>
<line x1="650.5" y1="163" x2="650.5" y2="538" stroke="#7c7c6a"/>
<line x1="500" y1="313.5" x2="875" y2="313.5" stroke="#7c7c6a"/>
<line x1="668.5" y1="163" x2="668.5" y2="538" stroke="#7c7c6a"/>
<line x1="500" y1="331.5" x2="875" y2="331.5" stroke="#7c7c6a"/>
<line x1="687.5" y1="163" x2="687.5" y2="538" stroke="#7c7c6a"/>
<line x1="500" y1="350.5" x2="875" y2="350.5" stroke="#7c7c6a"/>
<line x1="706.5" y1="163" x2="706.5" y2="538" stroke="#7c7c6a"/>
<line x1="500" y1="369.5" x2="875" y2="369.5" stroke="#7c7c6a"/>
<line x1="724.5" y1="163" x2="724.5" y2="538" stroke="#7c7c6a"/>
<line x1="500" y1="387.5" x2="875" y2="387.5" stroke="#7c7c6a"/>
<line x1="743.5" y1="163" x2="743.5" y2="538" stroke="#7c7c6a"/>
<line x1="500" y1="406.5" x2="875" y2="406.5" stroke="#7c7c6a"/>
<line x1="762.5" y1="163" x2="762.5" y2="538" stroke="#7c7c6a"/>
<line x1="500" y1="425.5" x2="875" y2="425.5" stroke="#7c7c6a"/>
<line x1="781.5" y1="163" x2="781.5" y2="538" stroke="#7c7c6a"/>
<line x1="500" y1="444.5" x2="875" y2="444.5" stroke="#7c7c6a"/>
<line x1="799.5" y1="163" x2="799.5" y2="538" stroke="#7c7c6a"/>
<line x1="500" y1="462.5" x2="875" y2="462.5" stroke="#7c7c6a"/>
<line x1="818.5" y1="163" x2="818.5" y2="538" stroke="#7c7c6a"/>
<line x1="500" y1="481.5" x2="875" y2="481.5" stroke="#7c7c6a"/>
<line x1="837.5" y1="163" x2="837.5" y2="538" stroke="#7c7c6a"/>
<line x1="500" y1="500.5" x2="875" y2="500.5" stroke="#7c7c6a"/>
<line x1="855.5" y1="163" x2="855.5" y2="538" stroke="#7c7c6a"/>
<line x1="500" y1="518.5" x2="875" y2="518.5" stroke="#7c7c6a"/>
<line x1="874.5" y1="163" x2="874.5" y2="538" stroke="#7c7c6a"/>
<line x1="500" y1="537.5" x2="875" y2="537.5" stroke="#7c7c6a"/>
</g>
<rect x="921.5" y="75.5" width="127" height="548" fill="#fff" stroke="#7a7a7a" stroke-width="1"/>
<rect x="1031" y="77" width="16" height="545" fill="#f0f0f0"/>
<rect x="1032" y="588" width="14" height="17" fill="#cdcdcd"/>
<path d="M1035,88.5 L1038.5,84 L1042,88.5" fill="none" stroke="#606060" stroke-width="1.8"/>
<path d="M1035,611 L1038.5,615.5 L1042,611" fill="none" stroke="#606060" stroke-width="1.8"/>
<text x="924.6" y="89.7" font-size="12" fill="#000" textLength="22.8" lengthAdjust="spacingAndGlyphs">ok 0</text>
<text x="924.6" y="103.7" font-size="12" fill="#000" textLength="22.8" lengthAdjust="spacingAndGlyphs">ok 0</text>
<text x="924.6" y="117.7" font-size="12" fill="#000" textLength="22.8" lengthAdjust="spacingAndGlyphs">ok 0</text>
<text x="924.6" y="131.7" font-size="12" fill="#000" textLength="22.8" lengthAdjust="spacingAndGlyphs">ok 0</text>
<text x="924.6" y="145.7" font-size="12" fill="#000" textLength="22.8" lengthAdjust="spacingAndGlyphs">ok 0</text>
<text x="924.6" y="159.7" font-size="12" fill="#000" textLength="22.8" lengthAdjust="spacingAndGlyphs">ok 0</text>
<text x="924.6" y="173.7" font-size="12" fill="#000" textLength="22.8" lengthAdjust="spacingAndGlyphs">ok 0</text>
<text x="924.6" y="187.7" font-size="12" fill="#000" textLength="22.8" lengthAdjust="spacingAndGlyphs">ok 0</text>
<text x="924.6" y="201.7" font-size="12" fill="#000" textLength="22.8" lengthAdjust="spacingAndGlyphs">ok 0</text>
<text x="924.6" y="215.7" font-size="12" fill="#000" textLength="22.8" lengthAdjust="spacingAndGlyphs">ok 0</text>
<text x="924.6" y="229.7" font-size="12" fill="#000" textLength="22.8" lengthAdjust="spacingAndGlyphs">ok 0</text>
<text x="924.6" y="243.7" font-size="12" fill="#000" textLength="22.8" lengthAdjust="spacingAndGlyphs">ok 0</text>
<text x="924.6" y="257.7" font-size="12" fill="#000" textLength="22.8" lengthAdjust="spacingAndGlyphs">ok 0</text>
<text x="924.6" y="271.7" font-size="12" fill="#000" textLength="22.8" lengthAdjust="spacingAndGlyphs">ok 0</text>
<text x="924.6" y="285.7" font-size="12" fill="#000" textLength="22.8" lengthAdjust="spacingAndGlyphs">ok 0</text>
<text x="924.6" y="299.7" font-size="12" fill="#000" textLength="22.8" lengthAdjust="spacingAndGlyphs">ok 0</text>
<text x="924.6" y="313.7" font-size="12" fill="#000" textLength="22.8" lengthAdjust="spacingAndGlyphs">ok 0</text>
<text x="924.6" y="327.7" font-size="12" fill="#000" textLength="22.8" lengthAdjust="spacingAndGlyphs">ok 0</text>
<text x="924.6" y="341.7" font-size="12" fill="#000" textLength="22.8" lengthAdjust="spacingAndGlyphs">ok 0</text>
<text x="924.6" y="355.7" font-size="12" fill="#000" textLength="22.8" lengthAdjust="spacingAndGlyphs">ok 0</text>
<text x="924.6" y="369.7" font-size="12" fill="#000" textLength="22.8" lengthAdjust="spacingAndGlyphs">ok 0</text>
<text x="924.6" y="383.7" font-size="12" fill="#000" textLength="22.8" lengthAdjust="spacingAndGlyphs">ok 0</text>
<text x="924.6" y="397.7" font-size="12" fill="#000" textLength="22.8" lengthAdjust="spacingAndGlyphs">ok 0</text>
<text x="924.6" y="411.7" font-size="12" fill="#000" textLength="22.8" lengthAdjust="spacingAndGlyphs">ok 0</text>
<text x="924.6" y="425.7" font-size="12" fill="#000" textLength="22.8" lengthAdjust="spacingAndGlyphs">ok 0</text>
<text x="924.6" y="439.7" font-size="12" fill="#000" textLength="22.8" lengthAdjust="spacingAndGlyphs">ok 0</text>
<text x="924.6" y="453.7" font-size="12" fill="#000" textLength="22.8" lengthAdjust="spacingAndGlyphs">ok 0</text>
<text x="924.6" y="467.7" font-size="12" fill="#000" textLength="22.8" lengthAdjust="spacingAndGlyphs">ok 0</text>
<text x="924.6" y="481.7" font-size="12" fill="#000" textLength="22.8" lengthAdjust="spacingAndGlyphs">ok 0</text>
<text x="924.6" y="495.7" font-size="12" fill="#000" textLength="22.8" lengthAdjust="spacingAndGlyphs">ok 0</text>
<text x="924.6" y="509.7" font-size="12" fill="#000" textLength="22.8" lengthAdjust="spacingAndGlyphs">ok 0</text>
<text x="924.6" y="523.7" font-size="12" fill="#000" textLength="22.8" lengthAdjust="spacingAndGlyphs">ok 0</text>
<text x="924.6" y="537.7" font-size="12" fill="#000" textLength="22.8" lengthAdjust="spacingAndGlyphs">ok 0</text>
<text x="924.6" y="551.7" font-size="12" fill="#000" textLength="22.8" lengthAdjust="spacingAndGlyphs">ok 0</text>
<text x="924.6" y="565.7" font-size="12" fill="#000" textLength="22.8" lengthAdjust="spacingAndGlyphs">ok 0</text>
<text x="924.6" y="579.7" font-size="12" fill="#000" textLength="22.8" lengthAdjust="spacingAndGlyphs">ok 0</text>
<text x="924.6" y="593.7" font-size="12" fill="#000" textLength="22.8" lengthAdjust="spacingAndGlyphs">ok 0</text>
<rect x="921.5" y="624.5" width="81" height="21" fill="#fff" stroke="#7a7a7a" stroke-width="1"/>
<text x="926.3" y="638.8" font-size="12" fill="#000" textLength="49.5" lengthAdjust="spacingAndGlyphs">g01 z300</text>
<rect x="1004.5" y="625.5" width="43" height="21" fill="#e1e1e1" stroke="#adadad" stroke-width="1"/>
<text x="1012" y="641.5" font-size="12" fill="#000" textLength="28" lengthAdjust="spacingAndGlyphs">Send</text>
<rect x="1" y="648" width="1048" height="1" fill="#dadada"/>
<rect x="1" y="649" width="1048" height="21" fill="#f0f0f0"/>
<rect x="1045" y="666" width="2" height="2" fill="#bdbdbd"/>
<rect x="1042" y="666" width="2" height="2" fill="#bdbdbd"/>
<rect x="1039" y="666" width="2" height="2" fill="#bdbdbd"/>
<rect x="1045" y="663" width="2" height="2" fill="#bdbdbd"/>
<rect x="1042" y="663" width="2" height="2" fill="#bdbdbd"/>
<rect x="1045" y="660" width="2" height="2" fill="#bdbdbd"/>
<text x="30.6" y="363.9" font-size="12" fill="#000" textLength="28.3" lengthAdjust="spacingAndGlyphs">Heat:</text>
<rect x="61.5" y="348.5" width="35" height="21" fill="#e1e1e1" stroke="#adadad" stroke-width="1"/>
<text x="71" y="364" font-size="12" fill="#000" textLength="17" lengthAdjust="spacingAndGlyphs">Off</text>
<rect x="98.5" y="347.5" width="79" height="21" fill="#fff" stroke="#7a7a7a" stroke-width="1"/>
<text x="103.5" y="362" font-size="12" fill="#000" textLength="35" lengthAdjust="spacingAndGlyphs">0 (off)</text>
<path d="M164.0,355.75 L168.5,360.25 L173.0,355.75" fill="none" stroke="#333" stroke-width="1"/>
<rect x="179.5" y="348.5" width="116" height="21" fill="#e1e1e1" stroke="#adadad" stroke-width="1"/>
<text x="228" y="364" font-size="12" fill="#000" textLength="18.5" lengthAdjust="spacingAndGlyphs">Set</text>
<text x="35" y="387.9" font-size="12" fill="#000" textLength="23.9" lengthAdjust="spacingAndGlyphs">Bed:</text>
<rect x="61.5" y="372.5" width="35" height="21" fill="#e1e1e1" stroke="#adadad" stroke-width="1"/>
<text x="71" y="388" font-size="12" fill="#000" textLength="17" lengthAdjust="spacingAndGlyphs">Off</text>
<rect x="98.5" y="371.5" width="79" height="21" fill="#fff" stroke="#7a7a7a" stroke-width="1"/>
<text x="103.5" y="386" font-size="12" fill="#000" textLength="35" lengthAdjust="spacingAndGlyphs">0 (off)</text>
<path d="M164.0,379.75 L168.5,384.25 L173.0,379.75" fill="none" stroke="#333" stroke-width="1"/>
<rect x="179.5" y="372.5" width="116" height="21" fill="#e1e1e1" stroke="#adadad" stroke-width="1"/>
<text x="228" y="388" font-size="12" fill="#000" textLength="18.5" lengthAdjust="spacingAndGlyphs">Set</text>
<rect x="2.5" y="396.5" width="145" height="21" fill="#dcc8c8" stroke="#adadad" stroke-width="1"/>
<rect x="3.5" y="397.5" width="143" height="19" fill="#dcc8c8" stroke="#e8e0e0" stroke-width="1"/>
<text x="75" y="412" font-size="12" fill="#000" textLength="42" lengthAdjust="spacingAndGlyphs" text-anchor="middle">Extrude</text>
<rect x="150.5" y="396.5" width="145" height="21" fill="#dcc8c8" stroke="#adadad" stroke-width="1"/>
<rect x="151.5" y="397.5" width="143" height="19" fill="#dcc8c8" stroke="#e8e0e0" stroke-width="1"/>
<text x="222.5" y="412" font-size="12" fill="#000" textLength="43" lengthAdjust="spacingAndGlyphs" text-anchor="middle">Reverse</text>
<text x="6.7" y="430.2" font-size="12" fill="#000" textLength="42" lengthAdjust="spacingAndGlyphs">Length:</text>
<text x="136" y="430.4" font-size="12" fill="#000" textLength="38.5" lengthAdjust="spacingAndGlyphs">Speed:</text>
<rect x="1.5" y="436.5" width="71" height="21" fill="#fff" stroke="#7a7a7a" stroke-width="1"/>
<text x="6" y="450.4" font-size="12" fill="#000" textLength="17.5" lengthAdjust="spacingAndGlyphs">5.0</text>
<rect x="75.5" y="437.5" width="14" height="19" fill="#e6e6e6" stroke="#adadad" stroke-width="1"/>
<line x1="75" y1="447.0" x2="90" y2="447.0" stroke="#adadad" stroke-width="1.2"/>
<path d="M79.9,443 L82.5,440 L85.1,443 Z" fill="#000"/>
<path d="M79.9,450 L82.5,453 L85.1,450 Z" fill="#000"/>
<text x="96.2" y="450.4" font-size="12" fill="#000" textLength="34.3" lengthAdjust="spacingAndGlyphs">mm @</text>
<rect x="136.5" y="436.5" width="71" height="21" fill="#fff" stroke="#7a7a7a" stroke-width="1"/>
<text x="140.8" y="450.4" font-size="12" fill="#000" textLength="33" lengthAdjust="spacingAndGlyphs">100.0</text>
<rect x="210.5" y="437.5" width="14" height="19" fill="#e6e6e6" stroke="#adadad" stroke-width="1"/>
<line x1="210" y1="447.0" x2="225" y2="447.0" stroke="#adadad" stroke-width="1.2"/>
<path d="M214.9,443 L217.5,440 L220.1,443 Z" fill="#000"/>
<path d="M214.9,450 L217.5,453 L220.1,450 Z" fill="#000"/>
<text x="231" y="445.4" font-size="12" fill="#000" textLength="23" lengthAdjust="spacingAndGlyphs">mm/</text>
<text x="231" y="458.3" font-size="12" fill="#000" textLength="18" lengthAdjust="spacingAndGlyphs">min</text>
<text x="1.5" y="477.4" font-size="12" fill="#000" textLength="65" lengthAdjust="spacingAndGlyphs">Print speed:</text>
<rect x="75.5" y="469.5" width="83" height="3" fill="#e7e7e7" stroke="#d6d6d6" stroke-width="1"/>
<path d="M99,463 L110,463 L110,477.5 L104.5,482.5 L99,477.5 Z" fill="#0078d7"/>
<rect x="167.5" y="462.5" width="61" height="20" fill="#fff" stroke="#7a7a7a" stroke-width="1"/>
<text x="172.2" y="477.2" font-size="12" fill="#000" textLength="19.5" lengthAdjust="spacingAndGlyphs">100</text>
<rect x="231.5" y="463.5" width="14" height="19" fill="#e6e6e6" stroke="#adadad" stroke-width="1"/>
<line x1="231" y1="473.0" x2="246" y2="473.0" stroke="#adadad" stroke-width="1.2"/>
<path d="M235.9,469 L238.5,466 L241.1,469 Z" fill="#000"/>
<path d="M235.9,476 L238.5,479 L241.1,476 Z" fill="#000"/>
<text x="247.3" y="477.4" font-size="12" fill="#000" textLength="11" lengthAdjust="spacingAndGlyphs">%</text>
<rect x="260.5" y="462.5" width="35" height="20" fill="#e1e1e1" stroke="#adadad" stroke-width="1"/>
<text x="268.5" y="477.8" font-size="12" fill="#000" textLength="19" lengthAdjust="spacingAndGlyphs">Set</text>
<text x="1.5" y="501.3" font-size="12" fill="#000" textLength="55.5" lengthAdjust="spacingAndGlyphs">Print flow:</text>
<rect x="65.5" y="493.5" width="113" height="3" fill="#e7e7e7" stroke="#d6d6d6" stroke-width="1"/>
<path d="M99,487 L110,487 L110,501.5 L104.5,506.5 L99,501.5 Z" fill="#0078d7"/>
<rect x="187.5" y="486.5" width="41" height="21" fill="#fff" stroke="#7a7a7a" stroke-width="1"/>
<text x="192.5" y="501.5" font-size="12" fill="#000" textLength="19.5" lengthAdjust="spacingAndGlyphs">100</text>
<rect x="231.5" y="487.5" width="14" height="19" fill="#e6e6e6" stroke="#adadad" stroke-width="1"/>
<line x1="231" y1="497.0" x2="246" y2="497.0" stroke="#adadad" stroke-width="1.2"/>
<path d="M235.9,493 L238.5,490 L241.1,493 Z" fill="#000"/>
<path d="M235.9,500 L238.5,503 L241.1,500 Z" fill="#000"/>
<text x="247.3" y="501.4" font-size="12" fill="#000" textLength="11" lengthAdjust="spacingAndGlyphs">%</text>
<rect x="260.5" y="486.5" width="35" height="21" fill="#e1e1e1" stroke="#adadad" stroke-width="1"/>
<text x="268.5" y="502" font-size="12" fill="#000" textLength="19" lengthAdjust="spacingAndGlyphs">Set</text>
<text x="2.2" y="520.6" font-size="12" fill="#000" textLength="181" lengthAdjust="spacingAndGlyphs">T:25.23 /0 B:27.67 /0 B@:0 @:0</text>
<line x1="302.5" y1="352" x2="302.5" y2="480" stroke="#dcdcdc"/>
<line x1="327.5" y1="352" x2="327.5" y2="480" stroke="#dcdcdc"/>
<line x1="351.5" y1="352" x2="351.5" y2="480" stroke="#dcdcdc"/>
<line x1="376.5" y1="352" x2="376.5" y2="480" stroke="#dcdcdc"/>
<line x1="401.5" y1="352" x2="401.5" y2="480" stroke="#dcdcdc"/>
<line x1="426.5" y1="352" x2="426.5" y2="480" stroke="#dcdcdc"/>
<line x1="451.5" y1="352" x2="451.5" y2="480" stroke="#dcdcdc"/>
<line x1="302" y1="368.5" x2="452" y2="368.5" stroke="#dcdcdc"/>
<line x1="302" y1="388.5" x2="452" y2="388.5" stroke="#dcdcdc"/>
<line x1="302" y1="407.5" x2="452" y2="407.5" stroke="#dcdcdc"/>
<line x1="302" y1="427.5" x2="452" y2="427.5" stroke="#dcdcdc"/>
<line x1="302" y1="446.5" x2="452" y2="446.5" stroke="#dcdcdc"/>
<svg x="302" y="352" width="160" height="130" overflow="hidden">
<text x="1.7" y="4" font-size="12" fill="#0a1a2a" font-weight="bold" textLength="23.5" lengthAdjust="spacingAndGlyphs">300</text>
<text x="1.7" y="23.69999999999999" font-size="12" fill="#0a1a2a" font-weight="bold" textLength="23.5" lengthAdjust="spacingAndGlyphs">250</text>
<text x="1.7" y="43.69999999999999" font-size="12" fill="#0a1a2a" font-weight="bold" textLength="23.5" lengthAdjust="spacingAndGlyphs">200</text>
<text x="1.7" y="62" font-size="12" fill="#0a1a2a" font-weight="bold" textLength="23.5" lengthAdjust="spacingAndGlyphs">150</text>
<text x="1.7" y="82.5" font-size="12" fill="#0a1a2a" font-weight="bold" textLength="23.5" lengthAdjust="spacingAndGlyphs">100</text>
<text x="1.7" y="101.39999999999998" font-size="12" fill="#0a1a2a" font-weight="bold" textLength="15.5" lengthAdjust="spacingAndGlyphs">50</text>
</svg>
<line x1="302" y1="455.5" x2="452" y2="455.5" stroke="#ff0000" stroke-width="1.2"/>
<line x1="302" y1="456.7" x2="452" y2="456.7" stroke="#2aa0ff" stroke-width="1"/>
<line x1="302" y1="466.5" x2="452" y2="466.5" stroke="#3a3a10" stroke-width="1.2"/>
<text x="396" y="462.3" font-size="11" fill="#ff0000" font-weight="bold" textLength="20.5" lengthAdjust="spacingAndGlyphs">Bed</text>
<text x="421" y="463.4" font-size="11" fill="#2aa0ff" font-weight="bold" textLength="19.4" lengthAdjust="spacingAndGlyphs">Ex0</text>
<text x="304.2" y="472.3" font-size="10.5" fill="#3a3a10" font-weight="bold" textLength="38.3" lengthAdjust="spacingAndGlyphs">Target</text>
<text x="302.5" y="473" font-size="10.5" fill="#2a2ad0" font-weight="bold" textLength="5" lengthAdjust="spacingAndGlyphs">0</text>
<text x="372.2" y="473" font-size="10.5" fill="#3a3a10" font-weight="bold" textLength="19.4" lengthAdjust="spacingAndGlyphs">Ex1</text>
<text x="421" y="473" font-size="10.5" fill="#111" font-weight="bold" textLength="18.4" lengthAdjust="spacingAndGlyphs">Fan</text>
<defs>
<radialGradient id="discg" gradientUnits="userSpaceOnUse" cx="205" cy="219" r="113">
<stop offset="0" stop-color="#f6f6f6"/>
<stop offset="0.3009" stop-color="#f4f4f4"/>
<stop offset="0.3673" stop-color="#e4e4e4"/>
<stop offset="0.3673" stop-color="#cfcfcf"/>
<stop offset="0.4248" stop-color="#dddddd"/>
<stop offset="0.5796" stop-color="#dedede"/>
<stop offset="0.5796" stop-color="#b6b6b6"/>
<stop offset="0.6372" stop-color="#c6c6c6"/>
<stop offset="0.7920" stop-color="#c8c8c8"/>
<stop offset="0.7920" stop-color="#9c9c9c"/>
<stop offset="0.8319" stop-color="#a6a6a6"/>
<stop offset="1" stop-color="#a8a8a8"/>
</radialGradient>
<linearGradient id="g_tl" x1="0" y1="0" x2="0" y2="1"><stop offset="0" stop-color="#e2de9e"/><stop offset="1" stop-color="#b0ab86"/></linearGradient>
<linearGradient id="g_tr" x1="0" y1="0" x2="0.3" y2="1"><stop offset="0" stop-color="#5f9a5f"/><stop offset="1" stop-color="#a4d2a4"/></linearGradient>
<linearGradient id="g_bl" x1="0" y1="0" x2="0" y2="1"><stop offset="0" stop-color="#fafafa"/><stop offset="1" stop-color="#e2e2e2"/></linearGradient>
<linearGradient id="g_br" x1="0" y1="0" x2="0" y2="1"><stop offset="0" stop-color="#8d93c9"/><stop offset="1" stop-color="#b0b4e2"/></linearGradient>
<linearGradient id="g_ay" x1="0" y1="0" x2="0" y2="1"><stop offset="0" stop-color="#979dd0"/><stop offset="1" stop-color="#b9bde6"/></linearGradient>
<linearGradient id="g_ax" x1="0" y1="0" x2="1" y2="0"><stop offset="0" stop-color="#dedb9e"/><stop offset="1" stop-color="#c6c290"/></linearGradient>
<linearGradient id="g_az" x1="0" y1="0" x2="0" y2="1"><stop offset="0" stop-color="#5f9c5f"/><stop offset="1" stop-color="#9dcd9d"/></linearGradient>
<linearGradient id="g_red" x1="0" y1="0" x2="0" y2="1"><stop offset="0" stop-color="#e95656"/><stop offset="1" stop-color="#f78080"/></linearGradient>
<linearGradient id="g_bar" x1="0" y1="0" x2="0" y2="1"><stop offset="0" stop-color="#cdcdcd"/><stop offset="0.35" stop-color="#e0e0e0"/><stop offset="0.6" stop-color="#f4f4f4"/><stop offset="0.8" stop-color="#e8e8e8"/><stop offset="1" stop-color="#d2d2d2"/></linearGradient>
<linearGradient id="g_zbar" x1="0" y1="0" x2="1" y2="0"><stop offset="0" stop-color="#000" stop-opacity="0.08"/><stop offset="0.15" stop-color="#000" stop-opacity="0"/><stop offset="0.85" stop-color="#000" stop-opacity="0"/><stop offset="1" stop-color="#000" stop-opacity="0.08"/></linearGradient>
<symbol id="house" viewBox="0 0 18 14.6" overflow="visible">
<path d="M0.6,8.6 L9,1 L17.4,8.6" fill="none" stroke="#2e2e2e" stroke-width="1.9" stroke-linejoin="miter" stroke-linecap="round"/>
<path d="M13.4,1.6 H15.1 V5.6 L13.4,4.2 Z" fill="#2e2e2e"/>
<path d="M2.4,8.9 L9,3.1 L15.4,8.9 V14.6 H11.1 V9.6 H6.7 V14.6 H2.4 Z" fill="#2e2e2e"/>
</symbol>
<mask id="barmask" maskUnits="userSpaceOnUse" x="0" y="0" width="1050" height="671">
<rect x="0" y="0" width="1050" height="671" fill="#fff"/>
<rect x="75" y="212.5" width="260" height="13" fill="#000" transform="rotate(45 205 219)"/>
<rect x="75" y="212.5" width="260" height="13" fill="#000" transform="rotate(-45 205 219)"/>
</mask>
<clipPath id="discclip"><circle cx="205" cy="219" r="112.8"/></clipPath>
<clipPath id="discclip2"><circle cx="205" cy="219" r="118"/></clipPath>
</defs>
<g filter="url(#blur3)" opacity="0.55">
<circle cx="206" cy="222" r="113" fill="#555"/>
<path d="M90,110.8 H137 V120.2 A121,121 0 0 0 100.3,156.7 H90 Z" fill="#555"/>
<path d="M273.9,110.8 H321 V156.7 H310.3 A121,121 0 0 0 273.9,120.2 Z" fill="#555"/>
<path d="M90,330.4 H137.1 V322.3 A121,121 0 0 1 100.6,284.4 H90 Z" fill="#555"/>
<path d="M320.6,330.5 H273.9 V322.3 A121,121 0 0 0 311,284.4 H320.6 Z" fill="#555"/>
<rect x="339" y="110" width="38" height="224" rx="5" fill="#555"/>
</g>
<defs><filter id="inset" x="-10%" y="-10%" width="120%" height="120%" color-interpolation-filters="sRGB"><feComponentTransfer in="SourceAlpha" result="inv"><feFuncA type="table" tableValues="1 0"/></feComponentTransfer><feGaussianBlur in="inv" stdDeviation="2.2"/><feOffset dx="1.4" dy="2.4" result="ob"/><feFlood flood-color="#000" flood-opacity="0.33"/><feComposite in2="ob" operator="in"/><feComposite in2="SourceAlpha" operator="in" result="sh"/><feMerge><feMergeNode in="SourceGraphic"/><feMergeNode in="sh"/></feMerge></filter></defs>
<g clip-path="url(#discclip)">
<g transform="rotate(45 205 219)">
<rect x="92" y="212" width="226" height="14" fill="url(#g_bar)"/>
</g>
<g transform="rotate(-45 205 219)">
<rect x="92" y="212" width="226" height="14" fill="url(#g_bar)"/>
</g>
</g>
<defs><filter id="dshadow" x="-10%" y="-10%" width="120%" height="120%"><feGaussianBlur in="SourceAlpha" stdDeviation="1.8"/><feOffset dx="1" dy="2" result="b"/><feFlood flood-color="#000" flood-opacity="0.38"/><feComposite in2="b" operator="in"/><feMerge><feMergeNode/><feMergeNode in="SourceGraphic"/></feMerge></filter></defs>
<defs><filter id="dshadow2" x="-20%" y="-20%" width="140%" height="140%"><feGaussianBlur in="SourceAlpha" stdDeviation="1.6"/><feOffset dx="0.8" dy="2" result="b"/><feFlood flood-color="#000" flood-opacity="0.22"/><feComposite in2="b" operator="in"/><feMerge><feMergeNode/><feMergeNode in="SourceGraphic"/></feMerge></filter></defs>
<g filter="url(#dshadow)" clip-path="url(#discclip2)">
<path d="M129.97,134.77 A112.8,112.8 0 0 1 280.03,134.77 L264.87,149.94 A91.4,91.4 0 0 0 145.13,149.94 Z" fill="#a5a5a5" filter="url(#inset)"/>
<path d="M289.23,143.97 A112.8,112.8 0 0 1 289.23,294.03 L274.06,278.87 A91.4,91.4 0 0 0 274.06,159.13 Z" fill="#a5a5a5" filter="url(#inset)"/>
<path d="M280.03,303.23 A112.8,112.8 0 0 1 129.97,303.23 L145.13,288.06 A91.4,91.4 0 0 0 264.87,288.06 Z" fill="#a5a5a5" filter="url(#inset)"/>
<path d="M120.77,294.03 A112.8,112.8 0 0 1 120.77,143.97 L135.94,159.13 A91.4,91.4 0 0 0 135.94,278.87 Z" fill="#a5a5a5" filter="url(#inset)"/>
<path d="M145.13,149.94 A91.4,91.4 0 0 1 264.87,149.94 L247.56,167.25 A67,67 0 0 0 162.44,167.25 Z" fill="#c5c5c5" filter="url(#inset)"/>
<path d="M274.06,159.13 A91.4,91.4 0 0 1 274.06,278.87 L256.75,261.56 A67,67 0 0 0 256.75,176.44 Z" fill="#c5c5c5" filter="url(#inset)"/>
<path d="M264.87,288.06 A91.4,91.4 0 0 1 145.13,288.06 L162.44,270.75 A67,67 0 0 0 247.56,270.75 Z" fill="#c5c5c5" filter="url(#inset)"/>
<path d="M135.94,278.87 A91.4,91.4 0 0 1 135.94,159.13 L153.25,176.44 A67,67 0 0 0 153.25,261.56 Z" fill="#c5c5c5" filter="url(#inset)"/>
<path d="M162.44,167.25 A67,67 0 0 1 247.56,167.25 L229.74,185.06 A42,42 0 0 0 180.26,185.06 Z" fill="#dcdcdc" filter="url(#inset)"/>
<path d="M256.75,176.44 A67,67 0 0 1 256.75,261.56 L238.94,243.74 A42,42 0 0 0 238.94,194.26 Z" fill="#dcdcdc" filter="url(#inset)"/>
<path d="M247.56,270.75 A67,67 0 0 1 162.44,270.75 L180.26,252.94 A42,42 0 0 0 229.74,252.94 Z" fill="#dcdcdc" filter="url(#inset)"/>
<path d="M153.25,261.56 A67,67 0 0 1 153.25,176.44 L171.06,194.26 A42,42 0 0 0 171.06,243.74 Z" fill="#dcdcdc" filter="url(#inset)"/>
<g filter="url(#dshadow2)">
<path d="M180.26,185.06 A42,42 0 0 1 229.74,185.06 L205.00,209.81 Z" fill="#f4f4f4"/>
<path d="M238.94,194.26 A42,42 0 0 1 238.94,243.74 L214.19,219.00 Z" fill="#f4f4f4"/>
<path d="M229.74,252.94 A42,42 0 0 1 180.26,252.94 L205.00,228.19 Z" fill="#f4f4f4"/>
<path d="M171.06,243.74 A42,42 0 0 1 171.06,194.26 L195.81,219.00 Z" fill="#f4f4f4"/>
</g>
</g>
<path d="M129.97,134.77 A112.8,112.8 0 0 1 280.03,134.77 L264.87,149.94 A91.4,91.4 0 0 0 145.13,149.94 Z" fill="none" stroke="#454545" stroke-width="1.1"/>
<path d="M289.23,143.97 A112.8,112.8 0 0 1 289.23,294.03 L274.06,278.87 A91.4,91.4 0 0 0 274.06,159.13 Z" fill="none" stroke="#454545" stroke-width="1.1"/>
<path d="M280.03,303.23 A112.8,112.8 0 0 1 129.97,303.23 L145.13,288.06 A91.4,91.4 0 0 0 264.87,288.06 Z" fill="none" stroke="#454545" stroke-width="1.1"/>
<path d="M120.77,294.03 A112.8,112.8 0 0 1 120.77,143.97 L135.94,159.13 A91.4,91.4 0 0 0 135.94,278.87 Z" fill="none" stroke="#454545" stroke-width="1.1"/>
<circle cx="132.9" cy="147" r="5.4" fill="#dcdcdc" stroke="#adadad" stroke-width="1.3"/>
<circle cx="133.6" cy="147.9" r="3.6" fill="#ececec" opacity="0.9"/>
<circle cx="150.3" cy="164.2" r="5.4" fill="#dcdcdc" stroke="#adadad" stroke-width="1.3"/>
<circle cx="151.0" cy="165.1" r="3.6" fill="#ececec" opacity="0.9"/>
<circle cx="167.4" cy="181.4" r="5.4" fill="#dcdcdc" stroke="#adadad" stroke-width="1.3"/>
<circle cx="168.1" cy="182.3" r="3.6" fill="#ececec" opacity="0.9"/>
<circle cx="185.2" cy="198.9" r="5.4" fill="#dcdcdc" stroke="#adadad" stroke-width="1.3"/>
<circle cx="185.89999999999998" cy="199.8" r="3.6" fill="#ececec" opacity="0.9"/>
<circle cx="226" cy="198" r="8.7" fill="#bababa" stroke="#f2d2d2" stroke-width="2.2"/>
<text x="226" y="201.42" font-size="9.5" font-weight="bold" fill="#fff" text-anchor="middle" textLength="12.5" lengthAdjust="spacingAndGlyphs">0.1</text>
<circle cx="241.5" cy="182.6" r="9.8" fill="#bababa" stroke="#f2d2d2" stroke-width="2.2"/>
<text x="241.5" y="186.38" font-size="10.5" font-weight="bold" fill="#fff" text-anchor="middle" textLength="5.5" lengthAdjust="spacingAndGlyphs">1</text>
<circle cx="259.5" cy="165.4" r="11.3" fill="#bababa" stroke="#f2d2d2" stroke-width="2.2"/>
<text x="259.5" y="169.36" font-size="11" font-weight="bold" fill="#fff" text-anchor="middle" textLength="12.2" lengthAdjust="spacingAndGlyphs">10</text>
<circle cx="278.2" cy="145.8" r="12.2" fill="#bababa" stroke="#f2d2d2" stroke-width="2.2"/>
<text x="278.2" y="149.76000000000002" font-size="11" font-weight="bold" fill="#fff" text-anchor="middle" textLength="19" lengthAdjust="spacingAndGlyphs">100</text>
<path d="M205,112.2 L222.2,129.2 H214.2 V146 H195.8 V129.2 H187.8 Z" fill="url(#g_ay)" stroke="#3a3a3a" stroke-width="1.2" stroke-linejoin="miter"/>
<path d="M205.3,327.6 L222.5,309.8 H214.5 V294.2 H196.10000000000002 V309.8 H188.10000000000002 Z" fill="url(#g_ay)" stroke="#3a3a3a" stroke-width="1.2" stroke-linejoin="miter"/>
<path d="M98.5,219.5 L116,202.5 V210.3 H132.5 V228.7 H116 V236.5 Z" fill="url(#g_ax)" stroke="#3a3a3a" stroke-width="1.2" stroke-linejoin="miter"/>
<path d="M312.5,219.6 L295.3,202.6 V210.4 H278.6 V228.79999999999998 H295.3 V236.6 Z" fill="url(#g_ax)" stroke="#3a3a3a" stroke-width="1.2" stroke-linejoin="miter"/>
<text x="194.6" y="131.7" font-size="17" font-weight="bold" fill="#000" stroke="#000" stroke-width="0.55" text-anchor="start" textLength="19.2" lengthAdjust="spacingAndGlyphs">+y</text>
<text x="196.6" y="317.7" font-size="17" font-weight="bold" fill="#000" stroke="#000" stroke-width="0.55" text-anchor="start" textLength="15.2" lengthAdjust="spacingAndGlyphs">-y</text>
<text x="108.3" y="223.8" font-size="17" font-weight="bold" fill="#000" stroke="#000" stroke-width="0.55" text-anchor="start" textLength="15.7" lengthAdjust="spacingAndGlyphs">-x</text>
<text x="283.8" y="223.7" font-size="17" font-weight="bold" fill="#000" stroke="#000" stroke-width="0.55" text-anchor="start" textLength="19" lengthAdjust="spacingAndGlyphs">+x</text>
<path d="M90,108.8 H137 V118.2 A121,121 0 0 0 100.3,154.7 H90 Z" fill="url(#g_tl)" stroke="#3a3a3a" stroke-width="1.4"/>
<path d="M273.9,108.8 H321 V154.7 H310.3 A121,121 0 0 0 273.9,118.2 Z" fill="url(#g_tr)" stroke="#3a3a3a" stroke-width="1.4"/>
<path d="M90.1,328.3 H137.1 V320.3 A121,121 0 0 1 100.6,282.4 H90.1 Z" fill="url(#g_bl)" stroke="#3a3a3a" stroke-width="1.4"/>
<path d="M320.6,328.5 H273.9 V320.3 A121,121 0 0 0 311,282.4 H320.6 Z" fill="url(#g_br)" stroke="#3a3a3a" stroke-width="1.4"/>
<use href="#house" x="93" y="111.2" width="18" height="14.6"/>
<text x="113.3" y="123.1" font-size="17" font-weight="bold" fill="#2e2e2e" stroke="#2e2e2e" stroke-width="0.55" text-anchor="start" textLength="9.5" lengthAdjust="spacingAndGlyphs">x</text>
<use href="#house" x="301" y="111.2" width="18" height="14.6"/>
<text x="289.8" y="125" font-size="17" font-weight="bold" fill="#2e2e2e" stroke="#2e2e2e" stroke-width="0.55" text-anchor="start" textLength="8.3" lengthAdjust="spacingAndGlyphs">z</text>
<use href="#house" x="93" y="310.3" width="18" height="14.8"/>
<use href="#house" x="300.8" y="310.1" width="18" height="14.6"/>
<text x="289.4" y="322.4" font-size="17" font-weight="bold" fill="#2e2e2e" stroke="#2e2e2e" stroke-width="0.55" text-anchor="start" textLength="9.5" lengthAdjust="spacingAndGlyphs">y</text>
<circle cx="205" cy="219.3" r="17" fill="url(#g_red)" stroke="#333" stroke-width="1.3"/>
<circle cx="199" cy="219.7" r="4" fill="none" stroke="#1a1a1a" stroke-width="1.9"/>
<path d="M191.2,219.7 H195 M203,219.7 H206.8 M199,211.9 V215.7 M199,223.7 V227.5" stroke="#1a1a1a" stroke-width="1.5"/>
<text x="208.3" y="216" font-size="12.5" font-weight="bold" fill="#1a1a1a" textLength="7.4" lengthAdjust="spacingAndGlyphs">y</text>
<text x="208.4" y="230" font-size="12.5" font-weight="bold" fill="#1a1a1a" textLength="6.8" lengthAdjust="spacingAndGlyphs">x</text>
<clipPath id="zclip"><rect x="338.5" y="108" width="37.30000000000001" height="223" rx="5"/></clipPath>
<g clip-path="url(#zclip)">
<rect x="338.5" y="108" width="37.30000000000001" height="29.5" fill="#9e9e9e"/>
<rect x="338.5" y="137.5" width="37.30000000000001" height="27.69999999999999" fill="#c4c4c4"/>
<rect x="338.5" y="165.2" width="37.30000000000001" height="25.5" fill="#dcdcdc"/>
<rect x="338.5" y="190.7" width="37.30000000000001" height="20.900000000000006" fill="#f4f4f4"/>
<rect x="338.5" y="211.6" width="37.30000000000001" height="13.900000000000006" fill="#9e9e9e"/>
<rect x="338.5" y="225.5" width="37.30000000000001" height="21.69999999999999" fill="#f4f4f4"/>
<rect x="338.5" y="247.2" width="37.30000000000001" height="25.19999999999999" fill="#e0e0e0"/>
<rect x="338.5" y="272.4" width="37.30000000000001" height="27.600000000000023" fill="#c6c6c6"/>
<rect x="338.5" y="300" width="37.30000000000001" height="32" fill="#9e9e9e"/>
<line x1="338.5" y1="137.5" x2="375.8" y2="137.5" stroke="#8a8a8a" stroke-width="0.5"/>
<line x1="338.5" y1="165.2" x2="375.8" y2="165.2" stroke="#8a8a8a" stroke-width="0.5"/>
<line x1="338.5" y1="190.7" x2="375.8" y2="190.7" stroke="#8a8a8a" stroke-width="0.5"/>
<line x1="338.5" y1="211.6" x2="375.8" y2="211.6" stroke="#8a8a8a" stroke-width="0.5"/>
<line x1="338.5" y1="225.5" x2="375.8" y2="225.5" stroke="#8a8a8a" stroke-width="0.5"/>
<line x1="338.5" y1="247.2" x2="375.8" y2="247.2" stroke="#8a8a8a" stroke-width="0.5"/>
<line x1="338.5" y1="272.4" x2="375.8" y2="272.4" stroke="#8a8a8a" stroke-width="0.5"/>
<line x1="338.5" y1="300" x2="375.8" y2="300" stroke="#8a8a8a" stroke-width="0.5"/>
</g>
<rect x="338.5" y="108" width="37.30000000000001" height="223" rx="5" fill="none" stroke="#6a6a6a" stroke-width="1.2"/>
<path d="M357.1,109.8 L375,126 H366.4 V137.5 H348.2 V126 H339.3 Z" fill="url(#g_az)" stroke="#3a3a3a" stroke-width="1.2"/>
<text x="348" y="128.6" font-size="17" font-weight="bold" fill="#000" stroke="#000" stroke-width="0.55" text-anchor="start" textLength="17.2" lengthAdjust="spacingAndGlyphs">+z</text>
<path d="M357,330.2 L375.8,313.7 H366.7 V300 H348.3 V313.7 H339 Z" fill="url(#g_az)" stroke="#3a3a3a" stroke-width="1.2"/>
<text x="350.2" y="320.5" font-size="17" font-weight="bold" fill="#000" stroke="#000" stroke-width="0.55" text-anchor="start" textLength="13.6" lengthAdjust="spacingAndGlyphs">-z</text>
<circle cx="357" cy="151.8" r="11.8" fill="#b9b9b9" stroke="#f2d2d2" stroke-width="2.2"/>
<text x="348.2" y="158" font-size="16" font-weight="bold" fill="#fff" textLength="17" lengthAdjust="spacingAndGlyphs">10</text>
<circle cx="357" cy="176.8" r="9.6" fill="#b9b9b9" stroke="#f2d2d2" stroke-width="2.2"/>
<text x="352.8" y="183" font-size="13.5" font-weight="bold" fill="#fff" textLength="7.5" lengthAdjust="spacingAndGlyphs">1</text>
<circle cx="357" cy="200.9" r="7.8" fill="#b9b9b9" stroke="#f2d2d2" stroke-width="2.2"/>
<text x="350.9" y="204.5" font-size="10" font-weight="bold" fill="#fff" textLength="12.5" lengthAdjust="spacingAndGlyphs">0.1</text>
<rect x="0.5" y="0.5" width="1049" height="670" fill="none" stroke="#5b5f5f" stroke-width="1"/>
<rect x="487" y="0" width="56" height="1" fill="#8c6414"/>
</svg>
</body></html>
